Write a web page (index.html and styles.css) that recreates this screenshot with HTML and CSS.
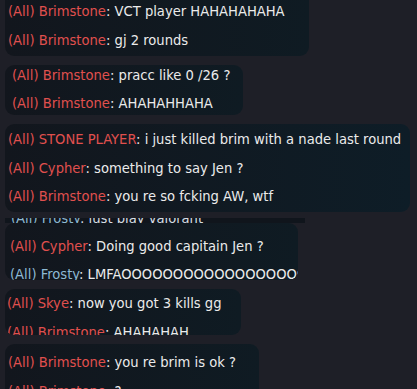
FILE: index.html
```html
<!DOCTYPE html>
<html>
<head>
<meta charset="UTF-8">
<title>Чат</title>
<link rel="stylesheet" href="styles.css">
</head>
<body>
<div class="chat">
	<div class="box box_1">
		<p class="msg"><span class="who">(All) Brimstone</span>: VCT player HAHAHAHAHA</p>
		<p class="msg"><span class="who">(All) Brimstone</span>: gj 2 rounds</p>
	</div>
	<div class="box box_2">
		<p class="msg"><span class="who">(All) Brimstone</span>: pracc like 0 /26 ?</p>
		<p class="msg"><span class="who">(All) Brimstone</span>: AHAHAHHAHA</p>
	</div>
	<div class="box box_3">
		<p class="msg"><span class="who">(All) STONE PLAYER</span>: i just killed brim with a nade last round</p>
		<p class="msg"><span class="who">(All) Cypher</span>: something to say Jen ?</p>
		<p class="msg"><span class="who">(All) Brimstone</span>: you re so fcking AW, wtf</p>
	</div>
	<div class="strip">
		<p class="msg"><span class="who blue">(All) Frosty</span>: just play valorant</p>
	</div>
	<div class="box box_4">
		<p class="msg"><span class="who">(All) Cypher</span>: Doing good capitain Jen ?</p>
		<p class="msg"><span class="who blue">(All) Frosty</span>: LMFAOOOOOOOOOOOOOOOOOO</p>
	</div>
	<div class="box box_5">
		<p class="msg"><span class="who">(All) Skye</span>: now you got 3 kills gg</p>
		<p class="msg"><span class="who">(All) Brimstone</span>: AHAHAHAH</p>
	</div>
	<div class="box box_6">
		<p class="msg"><span class="who">(All) Brimstone</span>: you re brim is ok ?</p>
		<p class="msg"><span class="who">(All) Brimstone</span>: ?</p>
	</div>
</div>
</body>
</html>
```
FILE: styles.css
```css
html, body {
	margin: 0;
	padding: 0;
	background: #1e1f27;
	height: 100%;
	overflow: hidden;
}

.chat {
	display: flex;
	flex-direction: column;
	align-items: flex-start;
	padding-left: 5px;
	font-family: 'DejaVu Sans Condensed', 'DejaVu Sans', sans-serif;
	font-size: 14.6px;
	color: #ebebeb;
}

/*плашки сообщений*/
.box {
	display: flex;
	flex-direction: column;
	flex-shrink: 0;
	background: linear-gradient(to right, #12161d, #0f1b23);
	border-radius: 9px;
	overflow: hidden;
	box-sizing: border-box;
	margin-top: 9px;
}
.msg {
	margin: 0;
	flex-shrink: 0;
	height: 18px;
	line-height: 18px;
	white-space: nowrap;
}
.who {
	color: #e0504e;
}
.who.blue {
	color: #8db9d3;
}

.box_1 {
	width: 304px;
	height: 66px;
	margin-top: -10px;
	padding: 12px 0 0 3px;
	gap: 11px;
}
.box_2 {
	width: 238px;
	height: 50px;
	padding: 1px 0 0 7px;
	gap: 10px;
}
.box_3 {
	width: 405px;
	height: 88px;
	padding: 6px 0 0 3px;
	gap: 10.5px;
	background: linear-gradient(to right, #12161d, #0e1d27);
}
/*обрезанная строка между плашками*/
.strip {
	flex-shrink: 0;
	width: 300px;
	height: 5px;
	margin-top: 6px;
	overflow: hidden;
	padding-left: 6px;
	box-sizing: border-box;
	background: #10151c;
}
.strip .msg {
	margin-top: -9.5px;
	color: #d6dde3;
}
.box_4 {
	width: 293px;
	height: 57px;
	margin-top: 0;
	padding: 14px 0 0 5px;
	gap: 10px;
}
.box_5 {
	width: 236px;
	height: 46px;
	padding: 5px 0 0 2px;
	gap: 11px;
}
.box_6 {
	width: 254px;
	height: 60px;
	padding: 9px 0 0 3px;
	gap: 11px;
}
```
